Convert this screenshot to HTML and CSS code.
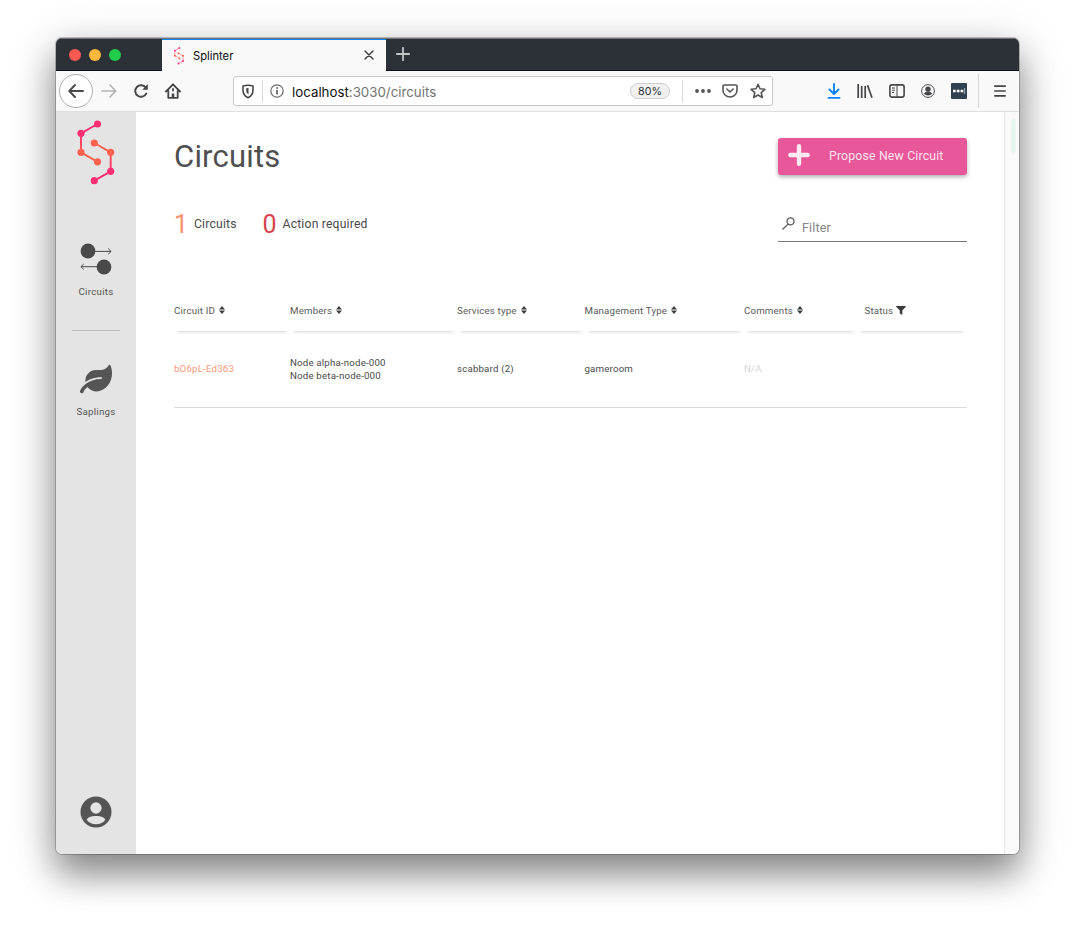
FILE: index.html
```html
<!DOCTYPE html>
<html lang="en">
<head>
<meta charset="utf-8">
<title>Splinter</title>
<link rel="stylesheet" href="styles.css">
</head>
<body>
<div class="window">
  <div class="tabbar">
    <div class="lights"><i class="light red"></i><i class="light amber"></i><i class="light green"></i></div>
    <div class="tab">
      <svg class="favicon" width="12" height="18" viewBox="0 0 40 66"><use href="#splinter"/></svg>
      <span class="tab-title">Splinter</span>
      <svg width="10" height="10" viewBox="0 0 10 10" fill="none" stroke="#444" stroke-width="1.500" stroke-linecap="round"><path d="M1 1l8 8M9 1L1 9"/></svg>
    </div>
    <svg class="newtab" width="14" height="14" viewBox="0 0 14 14" stroke="#c2c4c6" stroke-width="1.800" stroke-linecap="round"><path d="M7 .8v12.400M.8 7h12.400"/></svg>
  </div>

  <div class="toolbar">
    <span class="back"><svg width="16" height="14" viewBox="0 0 16 14" fill="none" stroke="#4a4a4c" stroke-width="1.900" stroke-linecap="round" stroke-linejoin="round"><path d="M15 7H1.500M7 1L1.300 7 7 13"/></svg></span>
    <svg class="forward" width="16" height="14" viewBox="0 0 16 14" fill="none" stroke="#b3b3b4" stroke-width="1.700" stroke-linecap="round" stroke-linejoin="round"><path d="M1 7h13.500M9 1l5.700 6L9 13"/></svg>
    <svg class="reload" width="16" height="16" viewBox="0 0 16 16" fill="none" stroke="#464648" stroke-width="1.900" stroke-linecap="round"><path d="M12.700 4.500A5.800 5.800 0 1 0 13.300 10.500"/><path d="M14.800 1v5.700H9.300z" fill="#464648" stroke="none"/></svg>
    <svg class="home" width="16" height="16" viewBox="0 0 16 16" fill="none" stroke="#464648" stroke-width="1.800" stroke-linecap="round" stroke-linejoin="round"><path d="M1 8.500L8 1.300l7 7.200M3.300 8v6.800h9.400V8"/><path d="M8 14.500v-4" stroke-width="2.600" stroke-linecap="butt"/><path d="M8 6v1.500" stroke-width="1.800"/></svg>
    <div class="urlbar">
      <svg width="14" height="15" viewBox="0 0 14 15" fill="none" stroke="#4a4a4c" stroke-width="1.600" stroke-linejoin="round"><path d="M7 1.200c2 0 3.600.4 5 .9v4.200c0 3.600-2.200 6.100-5 7.500-2.800-1.400-5-3.900-5-7.500V2.100c1.400-.5 3-.9 5-.9z"/><path d="M7.500 4v6.500C5.700 9.300 5.200 8 5.200 6.300V4.300z" fill="#4a4a4c" stroke="none"/></svg>
      <i class="rule short"></i>
      <svg width="14" height="14" viewBox="0 0 14 14" fill="none" stroke="#6a6a6c" stroke-width="1.200"><circle cx="7" cy="7" r="6.200"/><path d="M7 6v4.500" stroke-width="1.800"/><circle cx="7" cy="3.900" r="1" fill="#6a6a6c" stroke="none"/></svg>
      <span class="url">localhost<em>:3030/circuits</em></span>
      <span class="zoom">80%</span>
      <i class="rule bar"></i>
      <svg class="dots" width="16" height="4" viewBox="0 0 16 4" fill="#555"><circle cx="2" cy="2" r="1.900"/><circle cx="8" cy="2" r="1.900"/><circle cx="14" cy="2" r="1.900"/></svg>
      <svg class="pocket" width="16" height="14" viewBox="0 0 16 14" fill="none" stroke="#555" stroke-width="1.600" stroke-linecap="round" stroke-linejoin="round"><path d="M2.200 1h11.600q1.200 0 1.200 1.200v4A7 6.800 0 0 1 1 6.200v-4Q1 1 2.200 1z"/><path d="M4.900 5L8 8l3.100-3"/></svg>
      <svg class="star" width="16" height="16" viewBox="0 0 16 16" fill="none" stroke="#555" stroke-width="1.600" stroke-linejoin="round"><path d="M8 1.300l2 4.500 4.900.5-3.700 3.300 1.100 4.900L8 12l-4.300 2.500 1.100-4.900L1.100 6.300 6 5.800z"/></svg>
    </div>
    <div class="tools">
      <svg width="14" height="16" viewBox="0 0 14 16" fill="none" stroke="#0a84ff" stroke-width="1.900" stroke-linecap="round" stroke-linejoin="round"><path d="M7 1v9.500M2.500 6.500L7 11l4.500-4.500M1.500 14.900h11"/></svg>
      <svg width="16" height="14" viewBox="0 0 16 14" fill="none" stroke="#464648" stroke-width="1.700"><path d="M1.200 0v14M4.700 2v12M8.200 2v12M10.500 1.200L15 13.700"/></svg>
      <svg width="16" height="14" viewBox="0 0 16 14" fill="none" stroke="#464648" stroke-width="1.600"><rect x=".9" y=".9" width="14.200" height="12.200" rx="2"/><path d="M8 1v12" stroke-width="1"/><path d="M3 4h3M3 6.200h3M3 8.400h2" stroke-width="1"/></svg>
      <svg width="14" height="14" viewBox="0 0 14 14"><circle cx="7" cy="7" r="6.400" fill="none" stroke="#4a4a4c" stroke-width="1"/><circle cx="7" cy="5.100" r="2.700" fill="#464648"/><path d="M2.700 9.800Q4.200 8.300 5.600 7.600h2.800Q9.800 8.300 11.300 9.800 9.500 11.500 7 11.500T2.700 9.800z" fill="#464648"/></svg>
      <svg width="16" height="16" viewBox="0 0 16 16"><rect width="16" height="16" rx="1" fill="#2f4050"/><path d="M2 6.700h2.700v2.600H2zM5.800 6.700h2.700v2.600H5.800zM9.600 6.700h2.700v2.600H9.600z" fill="#fff"/><path d="M13.600 5v6" stroke="#a9b1b8"/></svg>
    </div>
    <i class="rule tall"></i>
    <svg class="menu" width="12" height="12" viewBox="0 0 12 12" stroke="#464648" stroke-width="1.700" stroke-linecap="round"><path d="M.8 1.200h10.400M.8 6h10.400M.8 10.800h10.400"/></svg>
  </div>

  <div class="app">
    <nav class="sidebar">
      <svg class="logo" width="40" height="66" viewBox="0 0 40 66">
        <defs>
          <linearGradient id="fadeA" x1="0" y1="13" x2="0" y2="32" gradientUnits="userSpaceOnUse"><stop stop-color="#ff2e74"/><stop offset="1" stop-color="#ff634f"/></linearGradient>
          <linearGradient id="fadeB" x1="0" y1="32" x2="0" y2="51" gradientUnits="userSpaceOnUse"><stop stop-color="#ff634f"/><stop offset="1" stop-color="#ff2e74"/></linearGradient>
          <g id="splinter">
            <g fill="none" stroke-width="2"><path d="M21.500 4L5 13.300V32.300L21.500 41.800" stroke="url(#fadeA)"/><path d="M18.300 23L34.700 32.300V51.300L18.300 60.700" stroke="url(#fadeB)"/></g>
            <g fill="#ff2e74"><circle cx="21.500" cy="4" r="3.600"/><circle cx="5" cy="13.300" r="3.600"/><circle cx="34.700" cy="51.300" r="3.600"/><circle cx="18.300" cy="60.700" r="3.600"/></g>
            <g fill="#ff634f"><circle cx="5" cy="32.300" r="3.600"/><circle cx="21.500" cy="41.800" r="3.600"/><circle cx="18.300" cy="23" r="3.600"/><circle cx="34.700" cy="32.300" r="3.600"/></g>
          </g>
        </defs>
        <use href="#splinter"/>
      </svg>
      <a class="nav">
        <svg width="32" height="32" viewBox="0 0 32 32" fill="none" stroke="#4a4a4a" stroke-width="1"><circle cx="8" cy="8" r="7.400" fill="#4a4a4a" stroke="none"/><circle cx="24" cy="24" r="7.400" fill="#4a4a4a" stroke="none"/><path d="M15 8.400h16M28.200 5.600l2.900 2.800-2.900 2.800M17 23.700H1M3.800 20.900L.9 23.700l2.900 2.800"/></svg>
        <span>Circuits</span>
      </a>
      <hr class="divider">
      <a class="nav">
        <svg width="32" height="32" viewBox="0 0 576 512" fill="#555"><path d="M546.200 9.700c-5.600-12.500-21.600-13-28.300-1.200C486.900 62.400 431.400 96 368 96h-80C182 96 96 182 96 288c0 7 .8 13.700 1.500 20.500C161.300 262.800 253.400 224 384 224c8.800 0 16 7.200 16 16s-7.200 16-16 16C132.600 256 26 410.100 2.400 468c-6.600 16.300 1.200 34.900 17.500 41.600 16.400 6.800 35-1.100 41.800-17.300 1.500-3.600 20.900-47.900 71.900-90.600 32.400 43.900 94 85.800 174.900 77.200C465.500 467.500 576 326.700 576 154.300c0-50.200-10.800-102.200-29.800-144.600z"/></svg>
        <span>Saplings</span>
      </a>
      <svg class="profile" width="32" height="32" viewBox="0 0 32 32"><circle cx="16" cy="16" r="15.500" fill="#555"/><ellipse cx="16" cy="12" rx="5.600" ry="5.800" fill="#e4e4e4"/><path d="M6.700 23.800C7.500 21.300 11 20 16 20s8.500 1.300 9.300 3.800C23.500 26.900 20 28.200 16 28.200S8.500 26.900 6.700 23.800z" fill="#e4e4e4"/></svg>
    </nav>

    <main class="content">
      <div class="heading">
        <h1>Circuits</h1>
        <button class="propose"><svg width="22" height="22" viewBox="0 0 22 22" stroke="#fdeaf3" stroke-width="4.400" stroke-linecap="round"><path d="M11 2.300v17.400M2.300 11h17.400"/></svg><span>Propose New Circuit</span></button>
      </div>
      <div class="summary">
        <b class="count orange">1</b><span class="label first">Circuits</span>
        <b class="count crimson">0</b><span class="label second">Action required</span>
        <div class="filter"><svg width="13" height="13" viewBox="0 0 13 13" fill="none" stroke="#5c5c5c" stroke-width="1.300"><circle cx="8.500" cy="4.300" r="3.500"/><path d="M6.200 6.900L.5 12.500"/></svg><span>Filter</span></div>
      </div>
      <div class="table">
        <div class="row head">
          <span>Circuit ID <svg class="sort" viewBox="0 0 6 8"><use href="#sort"/></svg></span>
          <span>Members <svg class="sort" viewBox="0 0 6 8"><use href="#sort"/></svg></span>
          <span>Services type <svg class="sort" viewBox="0 0 6 8"><use href="#sort"/></svg></span>
          <span>Management Type <svg class="sort" viewBox="0 0 6 8"><use href="#sort"/></svg></span>
          <span>Comments <svg class="sort" viewBox="0 0 6 8"><defs><path id="sort" d="M3 0l3 3.500H0zM0 4.500h6L3 8z"/></defs><use href="#sort"/></svg></span>
          <span class="status">Status <svg class="funnel" viewBox="0 0 10 9"><path d="M.4 0h9.200q.6.300.2.800L6.300 4.500V9L3.800 7.500v-3L.2.800Q-.1.300.4 0z"/></svg></span>
        </div>
        <div class="row data">
          <span class="id">bO6pL-Ed363</span>
          <span>Node alpha-node-000<br>Node beta-node-000</span>
          <span>scabbard (2)</span>
          <span>gameroom</span>
          <span class="na">N/A</span>
          <span></span>
        </div>
      </div>
    </main>
    <aside class="gutter"><i class="sliver"></i></aside>
  </div>
</div>
</body>
</html>
```
FILE: styles.css
```css
* { box-sizing: border-box; }
body { margin: 0; width: 1075px; height: 928px; padding: 38px 56px 0; background: #fff; overflow: hidden; font-family: Roboto, sans-serif; color: #444; }
svg { display: block; flex: none; }
i { display: block; flex: none; }

.window { width: 963px; height: 816px; border-radius: 6px; overflow: hidden; background: #fff; box-shadow: 0 0 0 1px rgba(0,0,0,.22), 0 20px 34px rgba(0,0,0,.38), 0 10px 50px rgba(0,0,0,.2); display: flex; flex-direction: column; }

.tabbar { height: 33px; flex: none; background: #2c3138; border-top: 1px solid #6f7377; border-bottom: 1px solid #0c0c14; display: flex; align-items: flex-start; }
.lights { width: 106px; display: flex; gap: 8px; padding: 10px 0 0 13px; }
.light { width: 12px; height: 12px; border-radius: 50%; }
.red { background: #ff5a52; }
.amber { background: #ffb83c; }
.green { background: #1fcc4c; }
.tab { width: 224px; height: 32px; background: #f9f9fa; border-top: 1px solid #0a84ff; display: flex; align-items: center; padding: 0 12px 0 11px; font: 11.200px Inter, sans-serif; color: #0c0c0d; }
.favicon { margin-right: 8px; }
.tab-title { flex: 1; }
.tab > svg:last-child { margin-top: -1px; }
.newtab { margin: 8px 0 0 10px; }

.toolbar { height: 41px; flex: none; background: #f9f9fa; border-bottom: 1px solid #e0e0e1; display: flex; align-items: center; padding: 0 11px 0 3px; }
.back { width: 34px; height: 34px; border: 1px solid #b1b1b1; border-radius: 50%; background: #fff; display: flex; align-items: center; justify-content: center; flex: none; }
.forward { margin-left: 8px; }
.reload { margin-left: 16px; }
.home { margin-left: 15.500px; }
.urlbar { width: 540px; height: 30px; margin-left: 52.500px; padding: 0 6px 0 7px; border: 1px solid #c9c9ca; border-radius: 3px; background: #fff; display: flex; align-items: center; }
.rule { width: 1px; background: #d8d8d9; }
.short { height: 22px; margin: 0 7px; }
.url { font: 13.300px Inter, sans-serif; color: #111; margin: 2px 0 0 8px; flex: 1; }
.url em { font-style: normal; color: #737373; }
.zoom { width: 40px; height: 16px; border: 1px solid #cfcfd0; border-radius: 8px; background: #f0f0f1; font: 10.700px/15px Inter, sans-serif; text-align: center; color: #333; }
.bar { height: 22px; margin: 0 12px; }
.pocket { margin-left: 11px; }
.star { margin-left: 12px; }
.tools { display: flex; align-items: center; gap: 16px; margin-left: 53.500px; }
.tall { height: 34px; margin: 0 15px 0 11px; }

.app { flex: 1; display: flex; min-height: 0; }
.sidebar { width: 80px; background: #e4e4e4; display: flex; flex-direction: column; align-items: center; padding-bottom: 26px; }
.logo { margin: 8px 0 0; }
.nav { display: flex; flex-direction: column; align-items: center; font-size: 9.700px; line-height: 12px; letter-spacing: .28px; color: #555; }
.logo + .nav { margin-top: 57px; }
.nav span { margin-top: 11px; }
.divider { width: 48px; height: 1px; border: 0; background: #bcbcbc; margin: 32px 0; }
.profile { margin-top: auto; }

.content { width: 868px; padding: 26px 37.500px 0 38px; }
.heading { display: flex; justify-content: space-between; align-items: flex-start; }
h1 { margin: 0; font-size: 31px; line-height: 38px; font-weight: 400; letter-spacing: .2px; color: #4f4f4f; }
.propose { width: 189px; height: 37px; margin-top: -.5px; border: 0; border-radius: 3px; background: #e85799; box-shadow: 0 2px 4px rgba(0,0,0,.32); color: #fce3ef; font: 12.300px Roboto, sans-serif; letter-spacing: .16px; display: flex; align-items: center; padding: 0 0 2px 10px; }
.propose span { margin: 2px 0 0 19.500px; white-space: nowrap; }
.summary { height: 42px; margin-top: 25px; display: flex; align-items: flex-start; }
.count { font-size: 25px; line-height: 48px; font-weight: 400; }
.orange { color: #ff8e6a; width: 20px; }
.crimson { color: #d9434c; width: 20px; margin-left: 25.500px; }
.label { font-size: 12.200px; line-height: 46px; letter-spacing: .18px; color: #4a4a4a; }
.label.first { width: 43px; }
.filter { width: 189px; height: 33px; margin: 8px 0 0 auto; border-bottom: 1px solid #777; display: flex; align-items: flex-start; padding: 8px 0 0 4px; font-size: 12.500px; line-height: 18px; letter-spacing: .15px; color: #858585; }
.filter span { margin: 2px 0 0 7.500px; }

.table { margin-top: 47px; width: 793px; font-size: 9.700px; line-height: 13px; letter-spacing: .18px; }
.row { display: grid; grid-template-columns: 116px 167px 127.500px 159.500px 113px 109.500px; }
.head span { height: 41px; padding-top: 14px; display: flex; align-items: flex-start; gap: 4px; box-shadow: 0 5px 3px -4px rgba(0,0,0,.17); white-space: nowrap; color: #5a5a5a; }
.head .status { padding-left: 7.500px; }
.sort { width: 6px; height: 8px; margin-top: 2px; fill: #3c3c3c; }
.funnel { width: 10px; height: 9px; margin: 2px 0 0 -1px; fill: #3c3c3c; }
.data { height: 77px; padding-bottom: 1px; border-bottom: 1px solid #dadada; align-items: center; color: #4a4a4a; }
.data .id { color: #ff9a7a; }
.data .na { color: #d4d4d4; }

.gutter { width: 15px; background: #fafafa; border-left: 1px solid #e6e6e6; padding: 7px 0 0 7px; }
.sliver { width: 3px; height: 33px; background: #e2f8ef; box-shadow: 0 2px 3px rgba(0,0,0,.07); }
```
